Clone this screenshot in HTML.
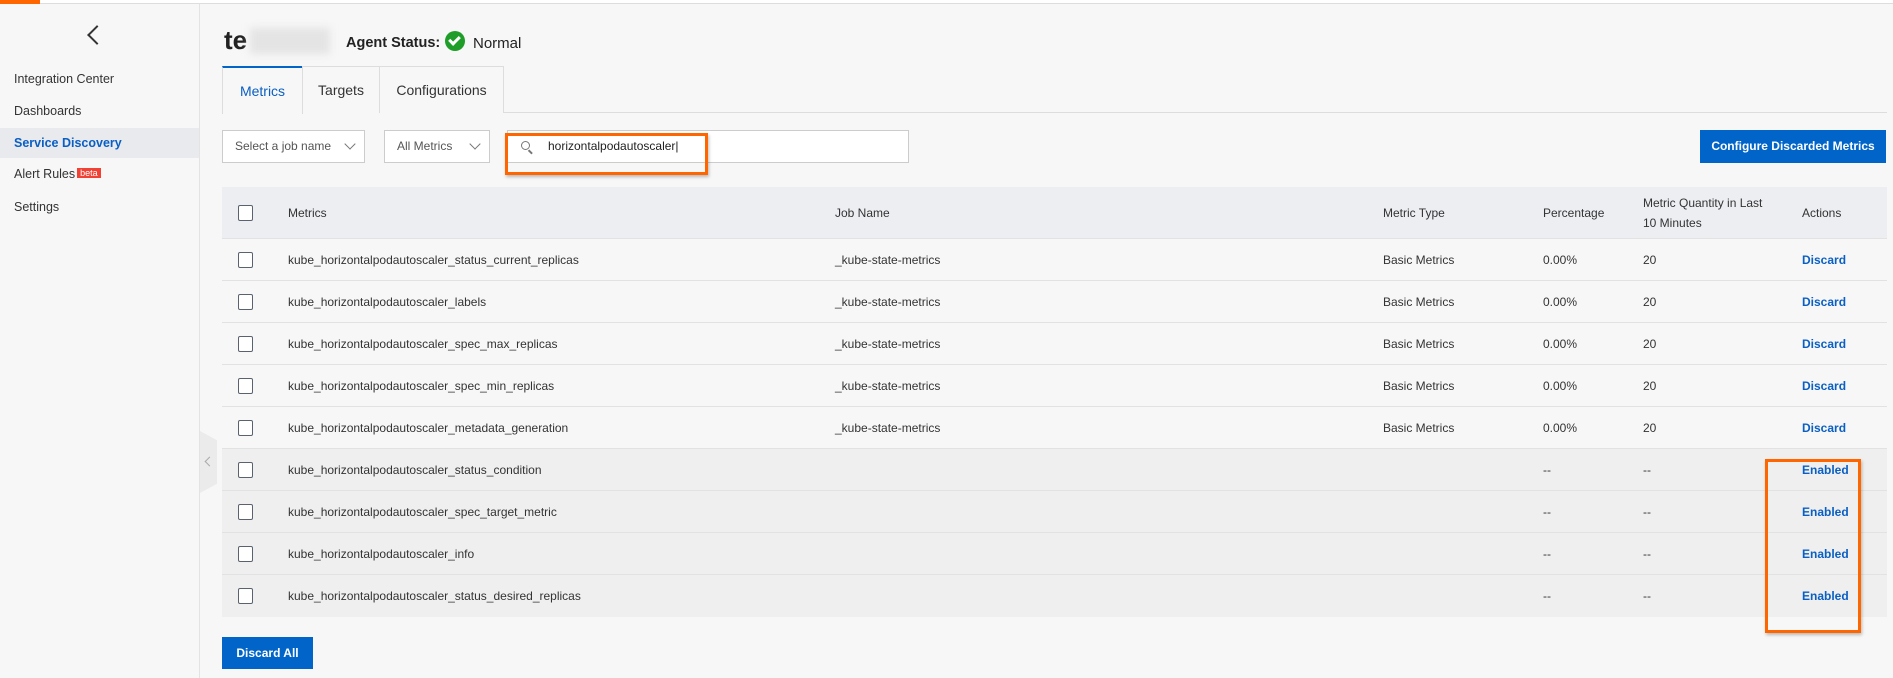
<!DOCTYPE html>
<html><head><style>
*{box-sizing:border-box;margin:0;padding:0}
body{width:1893px;height:678px;background:#f7f7f7;font-family:"Liberation Sans",sans-serif;color:#333;position:relative;overflow:hidden;font-size:13px}
.abs{position:absolute}
.side{left:0;top:4px;width:200px;height:674px;border-right:1px solid #e3e3e3;background:#f7f7f7}
.nav{position:absolute;left:14px;font-size:12.5px;color:#333}
.top{left:0;top:0;width:1893px;height:4px;border-bottom:1px solid #ddd;background:#fff}
.tab{position:absolute;top:66px;height:47px;border:1px solid #ddd;border-bottom:none;background:#f7f7f7;font-size:14px;text-align:center;line-height:46px;color:#333}
.sel{position:absolute;top:130px;height:33px;border:1px solid #ccc;background:#fff;font-size:12px;color:#555;line-height:31px;padding-left:12px}
.chev{position:absolute;right:10px;top:9px;width:8px;height:8px;border-right:1px solid #777;border-bottom:1px solid #777;transform:rotate(45deg)}
.row{position:absolute;left:222px;width:1665px;height:42px;border-bottom:1px solid #e2e2e2;font-size:12px;line-height:42px}
.row span{position:absolute}
.cb{position:absolute;left:16px;top:13px;width:15px;height:16px;border:1px solid #5a6270;border-radius:2px;background:#fff}
a{color:#0a5fc4;font-weight:bold;text-decoration:none}
.btn{background:#0064c8;color:#fff;font-weight:bold;font-size:12px;text-align:center}
</style></head><body>
<div class="abs top"></div>
<div class="abs" style="left:0;top:0;width:40px;height:4px;background:#f60"></div>
<div class="abs side">
 <div class="abs" style="left:90px;top:24px;width:14px;height:14px;border-left:2px solid #333;border-bottom:2px solid #333;transform:rotate(45deg)"></div>
 <div class="nav" style="top:68px">Integration Center</div>
 <div class="nav" style="top:100px">Dashboards</div>
 <div class="abs" style="left:0;top:124px;width:199px;height:30px;background:#e8eaee"></div>
 <div class="nav" style="top:132px;color:#0a5fc4;font-weight:bold">Service Discovery</div>
 <div class="nav" style="top:163px">Alert Rules<span style="background:#f04134;color:#fff;font-size:9px;padding:0 3px;margin-left:2px;vertical-align:2px">beta</span></div>
 <div class="nav" style="top:196px">Settings</div>
</div>
<div class="abs" style="left:200px;top:431px;width:17px;height:62px;background:#ebebeb;clip-path:polygon(0 0,100% 15%,100% 85%,0 100%)"></div>
<div class="abs" style="left:206px;top:458px;width:7px;height:7px;border-left:1px solid #aaa;border-bottom:1px solid #aaa;transform:rotate(45deg)"></div>
<div class="abs" style="left:224px;top:25px;font-size:26px;font-weight:bold;color:#222">te</div>
<div class="abs" style="left:250px;top:28px;width:80px;height:26px;background:#e4e4e4;filter:blur(4px)"></div>
<div class="abs" style="left:346px;top:35px;font-size:14.5px;font-weight:bold;color:#222">Agent Status:</div>
<div class="abs" style="left:445px;top:31px;width:20px;height:20px;border-radius:50%;background:#1e9e28"></div>
<div class="abs" style="left:451px;top:34px;width:7px;height:11px;border-right:3px solid #fff;border-bottom:3px solid #fff;transform:rotate(45deg)"></div>
<div class="abs" style="left:473px;top:35px;font-size:15px;color:#222">Normal</div>
<div class="abs" style="left:222px;top:112px;width:1665px;height:1px;background:#ddd"></div>
<div class="tab" style="left:222px;width:81px;color:#0a5fc4;border-top:2px solid #0064c8;background:#f7f7f7;height:48px">Metrics</div>
<div class="tab" style="left:302px;width:78px">Targets</div>
<div class="tab" style="left:379px;width:125px">Configurations</div>
<div class="sel" style="left:222px;width:143px">Select a job name<i class="chev"></i></div>
<div class="sel" style="left:384px;width:106px">All Metrics<i class="chev"></i></div>
<div class="sel" style="left:507px;width:402px;padding-left:40px;color:#222">horizontalpodautoscaler|</div>
<div class="abs" style="left:521px;top:141px;width:9px;height:9px;border:1.5px solid #777;border-radius:50%"></div>
<div class="abs" style="left:528px;top:151px;width:5px;height:1.5px;background:#777;transform:rotate(45deg)"></div>
<div class="abs" style="left:505px;top:133px;width:203px;height:42px;border:3px solid #f60;box-shadow:1px 2px 3px rgba(0,0,0,.25)"></div>
<div class="abs btn" style="left:1700px;top:130px;width:186px;height:33px;line-height:33px">Configure Discarded Metrics</div>
<div class="row" style="top:187px;height:52px;background:#eceef2;line-height:52px">
 <i class="cb" style="top:18px"></i><span style="left:66px">Metrics</span><span style="left:613px">Job Name</span><span style="left:1161px">Metric Type</span><span style="left:1321px">Percentage</span><span style="left:1421px;line-height:20px;top:6px">Metric Quantity in Last<br>10 Minutes</span><span style="left:1580px">Actions</span>
</div>
<div class="row" style="top:239px"><i class="cb"></i><span style="left:66px">kube_horizontalpodautoscaler_status_current_replicas</span><span style="left:613px">_kube-state-metrics</span><span style="left:1161px">Basic Metrics</span><span style="left:1321px">0.00%</span><span style="left:1421px">20</span><span style="left:1580px"><a>Discard</a></span></div>
<div class="row" style="top:281px"><i class="cb"></i><span style="left:66px">kube_horizontalpodautoscaler_labels</span><span style="left:613px">_kube-state-metrics</span><span style="left:1161px">Basic Metrics</span><span style="left:1321px">0.00%</span><span style="left:1421px">20</span><span style="left:1580px"><a>Discard</a></span></div>
<div class="row" style="top:323px"><i class="cb"></i><span style="left:66px">kube_horizontalpodautoscaler_spec_max_replicas</span><span style="left:613px">_kube-state-metrics</span><span style="left:1161px">Basic Metrics</span><span style="left:1321px">0.00%</span><span style="left:1421px">20</span><span style="left:1580px"><a>Discard</a></span></div>
<div class="row" style="top:365px"><i class="cb"></i><span style="left:66px">kube_horizontalpodautoscaler_spec_min_replicas</span><span style="left:613px">_kube-state-metrics</span><span style="left:1161px">Basic Metrics</span><span style="left:1321px">0.00%</span><span style="left:1421px">20</span><span style="left:1580px"><a>Discard</a></span></div>
<div class="row" style="top:407px"><i class="cb"></i><span style="left:66px">kube_horizontalpodautoscaler_metadata_generation</span><span style="left:613px">_kube-state-metrics</span><span style="left:1161px">Basic Metrics</span><span style="left:1321px">0.00%</span><span style="left:1421px">20</span><span style="left:1580px"><a>Discard</a></span></div>
<div class="row" style="top:449px;background:#efefef"><i class="cb"></i><span style="left:66px">kube_horizontalpodautoscaler_status_condition</span><span style="left:1321px">--</span><span style="left:1421px">--</span><span style="left:1580px"><a>Enabled</a></span></div>
<div class="row" style="top:491px;background:#efefef"><i class="cb"></i><span style="left:66px">kube_horizontalpodautoscaler_spec_target_metric</span><span style="left:1321px">--</span><span style="left:1421px">--</span><span style="left:1580px"><a>Enabled</a></span></div>
<div class="row" style="top:533px;background:#efefef"><i class="cb"></i><span style="left:66px">kube_horizontalpodautoscaler_info</span><span style="left:1321px">--</span><span style="left:1421px">--</span><span style="left:1580px"><a>Enabled</a></span></div>
<div class="row" style="top:575px;background:#efefef;border-bottom:none"><i class="cb"></i><span style="left:66px">kube_horizontalpodautoscaler_status_desired_replicas</span><span style="left:1321px">--</span><span style="left:1421px">--</span><span style="left:1580px"><a>Enabled</a></span></div>
<div class="abs" style="left:1765px;top:459px;width:96px;height:174px;border:3px solid #f60;box-shadow:1px 2px 3px rgba(0,0,0,.25)"></div>
<div class="abs btn" style="left:222px;top:637px;width:91px;height:32px;line-height:32px">Discard All</div>
</body></html>
